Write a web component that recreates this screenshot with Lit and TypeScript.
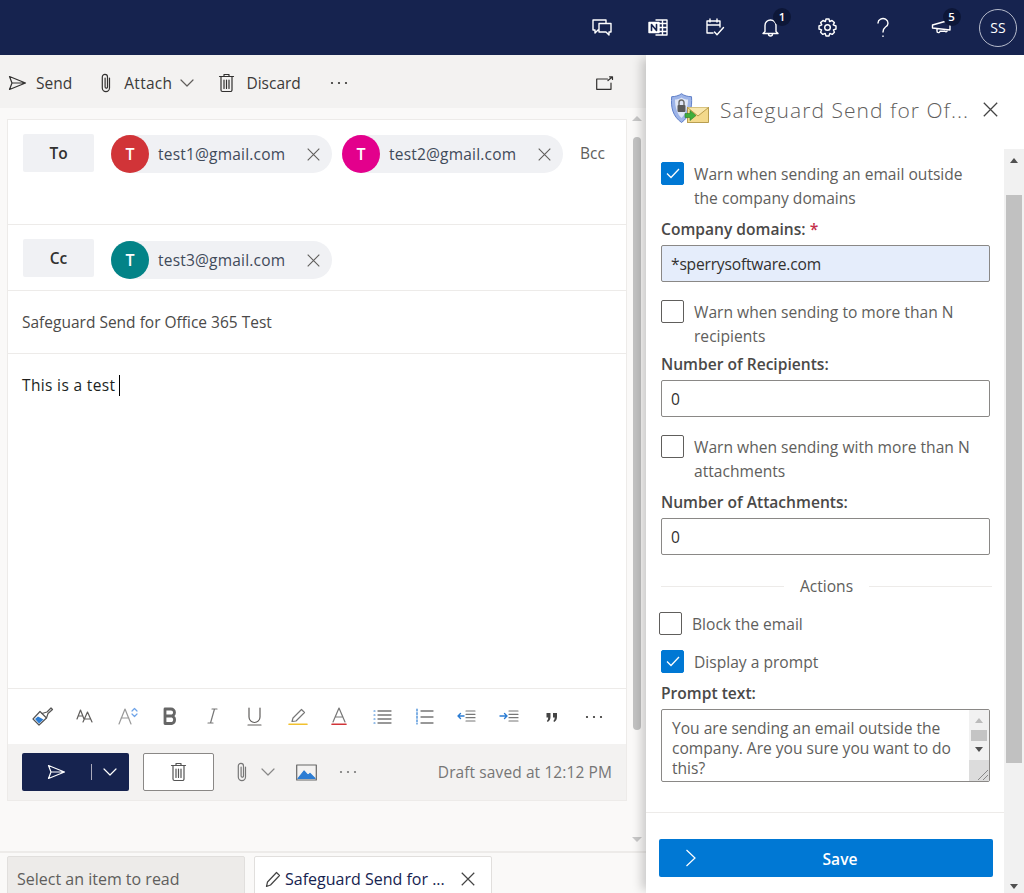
import { LitElement, html, css, svg } from "lit";
import { customElement } from "lit/decorators.js";

const ic = (w: number, h: number, body: unknown, color = "currentColor") => html`<svg
  width=${w} height=${h} viewBox="0 0 ${w} ${h}" fill="none" stroke=${color} stroke-width="1.2"
  stroke-linecap="round" stroke-linejoin="round" style="overflow:visible;flex:none">${body}</svg>`;

const sendIcon = (c: string) =>
  ic(19, 16, svg`<path d="M1.5 1.5 L17.5 8 L1.5 14.5 L4 8 Z M4 8 H17.5"/>`, c);
const clip = (c: string) =>
  ic(12, 22, svg`<path d="M9.5 6 V16 a3.6 3.6 0 0 1 -7.2 0 V5 a2.6 2.6 0 0 1 5.2 0 V15 a1.2 1.2 0 0 1 -2.4 0 V6"/>`, c);
const trash = (c: string) =>
  ic(17, 20, svg`<path d="M1.5 3.5 H15.5 M6 3.5 V1.5 H11 V3.5 M3 3.5 V17 a1.5 1.5 0 0 0 1.5 1.5 H12.5 a1.5 1.5 0 0 0 1.5 -1.5 V3.5 M6 7 V15.5 M8.5 7 V15.5 M11 7 V15.5"/>`, c);
const chev = (c: string) => ic(14, 8, svg`<path d="M1 1 L7 7 L13 1"/>`, c);
const cross = (c: string, s = 13) =>
  html`<svg width=${s} height=${s} viewBox="0 0 13 13" fill="none" stroke=${c} stroke-width="1.1" style="flex:none"><path d="M.7 .7 L12.3 12.3 M12.3 .7 L.7 12.3"/></svg>`;
const dots = (c: string) =>
  html`<svg width="18" height="4" viewBox="0 0 18 4" fill=${c} style="flex:none"><circle cx="2" cy="2" r="1.1"/><circle cx="9" cy="2" r="1.1"/><circle cx="16" cy="2" r="1.1"/></svg>`;
const tick = html`<svg width="14" height="11" viewBox="0 0 14 11" fill="none" stroke="#fff" stroke-width="1.3"><path d="M1 5.5 L5 9.5 L13 1"/></svg>`;

const headerIcons = [
  { body: svg`<path d="M1 2 H14 V5 M1 2 V12 H3 V15 L6 12 H7 M7 5.5 H19 V14 H17 V17 L14 14 H7 Z"/>` },
  { body: svg`<path d="M8 2 H19 V17 H8 M11 5.5 H19 M11 9.5 H19 M11 13.5 H19 M14.5 2 V17"/><rect x="1" y="4.5" width="10" height="10" fill="#fff" stroke="#fff"/><path d="M3.5 12.5 V6.5 L8.5 12.5 V6.5" stroke="#16234f" stroke-width="1.6"/>` },
  { body: svg`<path d="M8 15 H2 V3 H15 V9 M2 7 H15 M5 1 V4 M12 1 V4 M9.5 14 L12 16.8 L18.5 9.5"/>` },
  { body: svg`<path d="M4 13.5 V7.5 a5.5 5.5 0 0 1 11 0 V13.5 L17 15.5 H2 Z M7.5 16 a2 2 0 0 0 4 0"/>`, badge: "1" },
  { body: svg`<circle cx="9.5" cy="9.5" r="2.8"/><path d="M8 1 H11 L11.6 3.5 L14 2.5 L16.4 4.6 L15.2 6.8 L18 8 V11 L15.4 11.8 L16.4 14.2 L14.2 16.4 L11.8 15.4 L11 18 H8 L7.2 15.4 L4.8 16.4 L2.6 14.2 L3.6 11.8 L1 11 V8 L3.8 6.8 L2.6 4.6 L5 2.5 L7.4 3.5 Z"/>` },
  { body: svg`<path d="M4 5 a5 4.5 0 1 1 7.5 4 C9.5 10.5 9 11.5 9 14 M9 18 V18.4"/>` },
  { body: svg`<path d="M1.5 7 L19 2 V12 L1.5 10 Z M6 11 V13 a1.5 1.5 0 0 0 3 0.3 H14 a1.4 1.4 0 0 0 2 0"/>`, badge: "5" },
];

@customElement("compose-pane")
class ComposePane extends LitElement {
  static styles = css`
    :host {
      display: flex;
      flex-direction: column;
      width: 646px;
      height: 838px;
      background: #faf9f8;
      color: #323130;
      font: 15.5px/22px "Open Sans", sans-serif;
    }
    .top {
      height: 53px;
      background: #f3f2f1;
      display: flex;
      align-items: center;
      box-sizing: border-box;
      padding: 3px 32px 0 8px;
      color: #3b3a39;
      flex: none;
    }
    .top .act { display: flex; align-items: center; }
    .top .send { gap: 9px; margin-right: 28px; }
    .top .attach { gap: 12px; margin-right: 24px; }
    .top .attach span { letter-spacing: 0.3px; margin-right: -4px; }
    .top .discard { gap: 11px; margin-right: 29px; }
    .top .spacer { flex: 1; }
    .middle { flex: 1; display: flex; min-height: 0; padding-left: 7px; }
    .card { width: 620px; height: 682px; margin-top: 11px; background: #fff; border: 1px solid #edebe9; box-sizing: border-box; display: flex; flex-direction: column; flex: none; }
    .recip { display: flex; gap: 10px; align-items: flex-start; padding: 14px 0 0 15px; border-bottom: 1px solid #edebe9; box-sizing: border-box; flex: none; }
    .recip.to { height: 105px; }
    .recip.cc { height: 66px; }
    .tag { width: 71px; height: 38px; margin-right: 7px; background: #f0f1f4; border-radius: 2px; display: flex; align-items: center; justify-content: center; font-weight: 600; }
    .chip { width: 221px; height: 38px; margin-top: 1px; border-radius: 19px; background: #f0f1f4; display: flex; align-items: center; box-sizing: border-box; padding-right: 12px; }
    .cc .chip { margin-top: 2px; }
    .avatar { width: 38px; height: 38px; border-radius: 50%; color: #fff; display: flex; align-items: center; justify-content: center; font-weight: 600; font-size: 16px; }
    .chip .addr { flex: 1; margin-left: 9px; color: #3f4a5a; letter-spacing: 0.2px; }
    .bcc { margin: 8px 0 0 7px; color: #605e5c; }
    .subject { height: 63px; display: flex; align-items: center; padding-left: 14px; border-bottom: 1px solid #edebe9; box-sizing: border-box; color: #4b4a49; flex: none; }
    .body { flex: 1; padding: 20px 14px; color: #201f1e; letter-spacing: 0.35px; }
    .caret { display: inline-block; width: 1px; height: 21px; background: #000; vertical-align: -5px; margin-left: 4px; }
    .fmt { height: 56px; display: flex; align-items: center; border-top: 1px solid #edebe9; box-sizing: border-box; flex: none; }
    .fmt .lead { width: 13.8px; flex: none; }
    .fmt .cell { display: flex; justify-content: center; width: 42.4px; flex: none; color: #605e5c; }
    .send-bar { height: 56px; background: #f3f2f1; display: flex; align-items: center; padding: 0 14px; color: #605e5c; flex: none; }
    .send-btn { width: 107px; height: 38px; background: #16234f; border-radius: 2px; display: flex; align-items: center; box-sizing: border-box; padding-left: 25px; }
    .send-btn .sep { width: 1px; height: 16px; background: #aab; margin: 0 11px 0 25px; }
    .del-btn { width: 71px; height: 38px; margin-left: 14px; background: #fff; border: 1px solid #8a8886; border-radius: 2px; box-sizing: border-box; display: flex; align-items: center; justify-content: center; }
    .grp { display: flex; align-items: center; margin-left: 22px; }
    .grp .chv { margin: 0 21px 0 13px; display: flex; }
    .grp .more { margin-left: 22px; display: flex; }
    .draft { margin-left: auto; color: #767676; font-size: 15.5px; letter-spacing: 0.1px; }
    .scroll { width: 19px; display: flex; flex-direction: column; align-items: center; flex: none; }
    .thumb { width: 8px; height: 593px; margin-top: 16px; border-radius: 4px; background: #c2c2c2; }
    .arrow-up { width: 0; height: 0; border: 5px solid transparent; border-top: 0; border-bottom: 5px solid #c8c8c8; margin-top: 8px; }
    .arrow-dn { width: 0; height: 0; border: 5px solid transparent; border-bottom: 0; border-top: 5px solid #c8c8c8; margin-top: auto; margin-bottom: 9px; }
    .tabs { height: 42px; border-top: 2px solid #edebe9; display: flex; box-sizing: border-box; padding: 3px 0 0 7px; gap: 9px; overflow: hidden; flex: none; font-size: 16px; }
    .tab { height: 42px; border: 1px solid #e1dfdd; border-radius: 2px 2px 0 0; box-sizing: border-box; display: flex; align-items: center; padding-top: 4px; flex: none; }
    .tab.idle { width: 238px; background: #edebe9; padding-left: 9px; color: #605e5c; }
    .tab.open { width: 238px; background: #fff; padding-left: 10px; padding-right: 16px; color: #16234f; gap: 4px; }
    .tab.open .ttl { flex: 1; white-space: nowrap; }
  `;

  recipient(addr: string, color: string) {
    return html`<div class="chip">
      <div class="avatar" style="background:${color}">T</div>
      <span class="addr">${addr}</span>${cross("#605e5c")}
    </div>`;
  }

  render() {
    const fmtIcons = [
      svg`<path d="M1 12 L8 4.5 L14.5 11 L7 18 Z" fill="#fff" stroke="#555"/><path d="M3 12 L6 9.5 L11.5 12.5 L7 16.5 Z" fill="#2b7cd3" stroke="none"/><path d="M10 6.5 L15 5 L19 1 L20.5 2.5 L16 6.5 L14.5 11" stroke="#555"/>`,
      svg`<path d="M2 12 L5.5 3 L9 12 M3.3 9 H7.7 M8 15 L12.5 5 L17 15 M9.7 12 H15.3"/>`,
      svg`<path d="M2 17 L8 2 L14 17 M4 11 H12" stroke="#999"/><path d="M15 4 L17.5 1.5 L20 4 M15 7 L17.5 9.5 L20 7" stroke="#6ea3e8"/>`,
      svg`<path d="M5 2 H11 a3.5 3.5 0 0 1 0 7 H5 Z M5 9 H12 a4 4 0 0 1 0 7.5 H5 Z" stroke-width="2.8" stroke="#666"/>`,
      svg`<path d="M6 16 H11 M10 2 H15 M8.5 16 L12.5 2" stroke="#777"/>`,
      svg`<path d="M5 1 V10 a5.5 5.5 0 0 0 11 0 V1 M4 18 H17"/>`,
      svg`<path d="M6 11 L14.5 2.5 L17.5 5.5 L9 14 L5 14.5 Z" stroke="#777"/><path d="M2 17.3 H20" stroke="#f2c12e" stroke-width="1.6"/>`,
      svg`<path d="M4 15 L10 1 L16 15 M6 10 H14" stroke="#777"/><path d="M3 17.3 H17" stroke="#d13438" stroke-width="1.6"/>`,
      svg`<path d="M6 4 H19 M6 8 H19 M6 12 H19 M6 16 H19" stroke="#777" stroke-width="1.3"/><path d="M2 4 H3 M2 8 H3 M2 12 H3 M2 16 H3" stroke="#2b7cd3"/>`,
      svg`<path d="M7 4 H19 M7 10 H19 M7 16 H19" stroke="#777" stroke-width="1.3"/><path d="M3 2 V17" stroke="#2b7cd3" stroke-dasharray="2 1.6"/>`,
      svg`<path d="M2 9 H8 M4.5 6.5 L2 9 L4.5 11.5" stroke="#2b7cd3" stroke-width="1.4"/><path d="M10 4 H19 M10 7.3 H19 M10 10.7 H19 M10 14 H19" stroke="#777"/>`,
      svg`<path d="M1 9 H8 M5.5 6.5 L8 9 L5.5 11.5" stroke="#2b7cd3" stroke-width="1.4"/><path d="M10 4 H19 M10 7.3 H19 M10 10.7 H19 M10 14 H19" stroke="#777"/>`,
      svg`<path d="M5.5 6 H9.5 V10 C9.5 12 8.5 14 6.8 15 L5.8 14 C6.8 13 7.2 12 7.2 10.5 H5.5 Z M12 6 H16 V10 C16 12 15 14 13.3 15 L12.3 14 C13.3 13 13.7 12 13.7 10.5 H12 Z" fill="#444" stroke="none"/>`,
    ];
    return html`
      <div class="top">
        <div class="act send">${sendIcon("#323130")}<span>Send</span></div>
        <div class="act attach">${clip("#323130")}<span>Attach</span>${chev("#605e5c")}</div>
        <div class="act discard">${trash("#323130")}<span>Discard</span></div>
        ${dots("#323130")}
        <div class="spacer"></div>
        ${ic(18, 14, svg`<path d="M11.5 3 H.7 V13.3 H15 V7 M12 4.5 L16.5 .8 M13.5 .8 H16.5 V3.5" />`, "#323130")}
      </div>
      <div class="middle">
        <div class="card">
          <div class="recip to">
            <div class="tag">To</div>
            ${this.recipient("test1@gmail.com", "#d13438")}
            ${this.recipient("test2@gmail.com", "#e3008c")}
            <span class="bcc">Bcc</span>
          </div>
          <div class="recip cc">
            <div class="tag">Cc</div>
            ${this.recipient("test3@gmail.com", "#038387")}
          </div>
          <div class="subject">Safeguard Send for Office 365 Test</div>
          <div class="body">This is a test<span class="caret"></span></div>
          <div class="fmt">
            <span class="lead"></span>
            ${fmtIcons.map((b) => html`<span class="cell">${ic(21, 19, b)}</span>`)}
            <span class="cell">${dots("#323130")}</span>
          </div>
          <div class="send-bar">
            <div class="send-btn">${sendIcon("#fff")}<span class="sep"></span>${chev("#fff")}</div>
            <div class="del-btn">${trash("#555")}</div>
            <div class="grp">
              ${clip("#777")}<span class="chv">${chev("#888")}</span>
              ${ic(21, 17, svg`<rect x=".7" y="1" width="19.6" height="15" stroke="#666"/><path d="M2 14.5 L8 7 L12 11.5 L14 9.5 L19 14.5 Z" fill="#2b7cd3" stroke="#2b7cd3"/>`)}
              <span class="more">${dots("#777")}</span>
            </div>
            <span class="draft">Draft saved at 12:12 PM</span>
          </div>
        </div>
        <div class="scroll"><span class="arrow-up"></span><div class="thumb"></div><span class="arrow-dn"></span></div>
      </div>
      <div class="tabs">
        <div class="tab idle">Select an item to read</div>
        <div class="tab open">
          ${ic(16, 17, svg`<path d="M1.5 15.5 L2.5 11 L11.5 1.5 L14.5 4.5 L5.5 14 Z"/>`, "#444")}
          <span class="ttl">Safeguard Send for ...</span>${cross("#444", 14)}
        </div>
      </div>
    `;
  }
}

@customElement("addin-pane")
class AddinPane extends LitElement {
  static styles = css`
    :host {
      display: flex;
      flex-direction: column;
      width: 378px;
      height: 838px;
      background: #fff;
      color: #605e5c;
      font: 15.6px/24px "Open Sans", sans-serif;
      box-shadow: -7px 0 10px -3px rgba(0, 0, 0, 0.2);
      position: relative;
    }
    .head { height: 94px; display: flex; align-items: center; padding: 14px 26px 0 25px; box-sizing: border-box; flex: none; }
    .head h1 { flex: 1; margin: 2px 0 0 11px; font-weight: 300; font-size: 21px; letter-spacing: 1.05px; color: #5f5e5d; white-space: nowrap; }
    .row { flex: 1; display: flex; min-height: 0; }
    .col { flex: 1; display: flex; flex-direction: column; min-width: 0; }
    .form { flex: 1; padding: 13px 14px 0 15px; display: flex; flex-direction: column; }
    .check { display: flex; gap: 10px; }
    .box { width: 23px; height: 23px; flex: none; border: 1px solid #605e5c; border-radius: 2px; box-sizing: border-box; display: flex; align-items: center; justify-content: center; }
    .box.on { background: #0078d4; border-color: #0078d4; }
    label { display: block; margin-top: 7px; color: #4a4948; font-weight: 600; font-size: 15.6px; line-height: 24px; }
    label.tight { margin-top: 4px; }
    label i { color: #c4314b; font-style: normal; }
    .field { display: block; width: 329px; height: 37px; margin-top: 4px; box-sizing: border-box; border: 1px solid #8a8886; border-radius: 2px; padding: 0 9px; font: inherit; letter-spacing: -0.2px; color: #323130; background: #fff; }
    .field.fill { background: #e5edfb; }
    .gap { margin-top: 18px; }
    .divider { display: flex; align-items: center; gap: 16px; margin-top: 19px; width: 331px; color: #605e5c; }
    .divider::before, .divider::after { content: ""; flex: 1; height: 1px; background: #edebe9; }
    .block { margin: 14px 0 0 -2px; }
    .prompt-row { margin-top: 14px; }
    .area { width: 329px; height: 73px; margin-top: 4px; box-sizing: border-box; border: 1px solid #8a8886; border-radius: 2px; display: flex; overflow: hidden; color: #605e5c; line-height: 20px; }
    .area p { flex: 1; margin: 0; padding: 8px 10px; letter-spacing: -0.02px; }
    .area .sb { width: 20px; background: #f1f1f1; display: flex; flex-direction: column; align-items: center; flex: none; }
    .area .sb b { width: 16px; height: 11px; background: #c4c4c4; margin: 7px 0 6px; }
    .area .sb .corner { width: 100%; height: 21px; margin-top: auto; background: #dcdcdc; display: flex; align-items: flex-end; justify-content: flex-end; }
    .up { width: 0; height: 0; border: 4px solid transparent; border-top: 0; border-bottom: 5px solid #bbb; margin-top: 8px; }
    .dn { width: 0; height: 0; border: 4px solid transparent; border-bottom: 0; border-top: 5px solid #505050; }
    .foot { height: 81px; border-top: 1px solid #edebe9; box-sizing: border-box; padding: 26px 0 0 13px; flex: none; }
    .save { width: 334px; height: 38px; background: #0078d4; border-radius: 2px; color: #fff; font-weight: 600; display: flex; align-items: center; position: relative; justify-content: center; padding: 1px 0 0 28px; box-sizing: border-box; }
    .save svg { position: absolute; left: 26px; top: 10px; }
    .vbar { width: 20px; background: #f1f1f1; display: flex; flex-direction: column; align-items: center; flex: none; }
    .vbar .thumb { width: 16px; height: 568px; background: #c1c1c1; margin-top: 32px; }
    .vbar .up { border-bottom-color: #505050; margin-top: 9px; }
    .vbar .dn { margin-top: auto; margin-bottom: 4px; }
  `;

  checkRow(on: boolean, text: unknown) {
    return html`<div class="check">
      <span class="box ${on ? "on" : ""}">${on ? tick : ""}</span><span>${text}</span>
    </div>`;
  }

  render() {
    return html`
      <div class="head">
        <svg width="38" height="32" viewBox="0 0 38 32" style="flex:none">
          <path d="M10.5 .7 C8 2.7 4 3.7 .7 3.7 C-.3 14 1.5 23 10.5 29.5 C19.5 23 21.3 14 20.5 3.7 C17 3.7 13 2.7 10.5 .7 Z" fill="#9db4e8" stroke="#5f7fc8"/>
          <path d="M10.5 4.5 C8.5 6 6 6.5 4 6.5 C4 14 6 21 10.5 25 C15 21 17 14 17 6.5 C15 6.5 12.5 6 10.5 4.5 Z" fill="#dfe6f6"/>
          <rect x="6.5" y="12" width="8" height="7" rx="1" fill="#5a5a5a"/>
          <path d="M8 12 V9.5 a2.5 2.5 0 0 1 5 0 V12" fill="none" stroke="#6a6a6a" stroke-width="1.4"/>
          <rect x="16.5" y="14.5" width="21" height="15" fill="#f3d98b" stroke="#a98a35" stroke-width=".8"/>
          <path d="M16.5 14.5 L27 23 L37.5 14.5" fill="#f8e7ae" stroke="#a98a35" stroke-width=".8"/>
          <path d="M14 20.5 H19 V17.5 L25 22.5 L19 27.5 V24.5 H14 Z" fill="#3fae3a" stroke="#2c7d28" stroke-width=".6"/>
        </svg>
        <h1>Safeguard Send for Of...</h1>
        ${cross("#444", 15)}
      </div>
      <div class="row">
        <div class="col">
          <div class="form">
            ${this.checkRow(true, html`Warn when sending an email outside<br />the company domains`)}
            <label>Company domains: <i>*</i></label>
            <input class="field fill" value="*sperrysoftware.com" />
            <div class="gap">${this.checkRow(false, html`Warn when sending to more than N<br />recipients`)}</div>
            <label class="tight">Number of Recipients:</label>
            <input class="field" value="0" />
            <div class="gap">${this.checkRow(false, html`Warn when sending with more than N<br />attachments`)}</div>
            <label>Number of Attachments:</label>
            <input class="field" value="0" />
            <div class="divider">Actions</div>
            <div class="block">${this.checkRow(false, "Block the email")}</div>
            <div class="prompt-row">${this.checkRow(true, "Display a prompt")}</div>
            <label>Prompt text:</label>
            <div class="area">
              <p>You are sending an email outside the company. Are you sure you want to do this?</p>
              <div class="sb">
                <span class="up"></span><b></b><span class="dn"></span>
                <span class="corner"><svg width="12" height="12" viewBox="0 0 12 12" stroke="#888"><path d="M1 11 L11 1 M6 11 L11 6"/></svg></span>
              </div>
            </div>
          </div>
          <div class="foot">
            <div class="save">
              <svg width="12" height="18" viewBox="0 0 12 18" fill="none" stroke="#fff" stroke-width="1.2"><path d="M1.5 1 L10 9 L1.5 17"/></svg>
              Save
            </div>
          </div>
        </div>
        <div class="vbar"><span class="up"></span><div class="thumb"></div><span class="dn"></span></div>
      </div>
    `;
  }
}

@customElement("app-root")
class AppRoot extends LitElement {
  static styles = css`
    :host { display: block; width: 1024px; height: 893px; overflow: hidden; font-family: "Open Sans", sans-serif; }
    .bar { height: 55px; background: #16234f; display: flex; align-items: center; justify-content: flex-end; padding-right: 7px; color: #fff; }
    .cell { width: 56.5px; height: 55px; display: flex; align-items: center; justify-content: center; position: relative; }
    .cell svg { stroke-width: 1.4; }
    .badge { position: absolute; top: 8px; left: 30px; width: 18px; height: 18px; border-radius: 50%; background: #0d1738; font-size: 11.5px; line-height: 18px; text-align: center; font-weight: 600; }
    .me { width: 38px; height: 38px; margin-left: 10px; box-sizing: border-box; border: 1px solid #b6bbcb; border-radius: 50%; display: flex; align-items: center; justify-content: center; font-size: 14px; }
    .main { display: flex; overflow: hidden; }
  `;

  render() {
    return html`
      <div class="bar">
        ${headerIcons.map(
          (i) => html`<div class="cell">
            ${ic(20, 20, i.body)}${i.badge ? html`<span class="badge">${i.badge}</span>` : ""}
          </div>`
        )}
        <div class="me">SS</div>
      </div>
      <div class="main"><compose-pane></compose-pane><addin-pane></addin-pane></div>
    `;
  }
}
